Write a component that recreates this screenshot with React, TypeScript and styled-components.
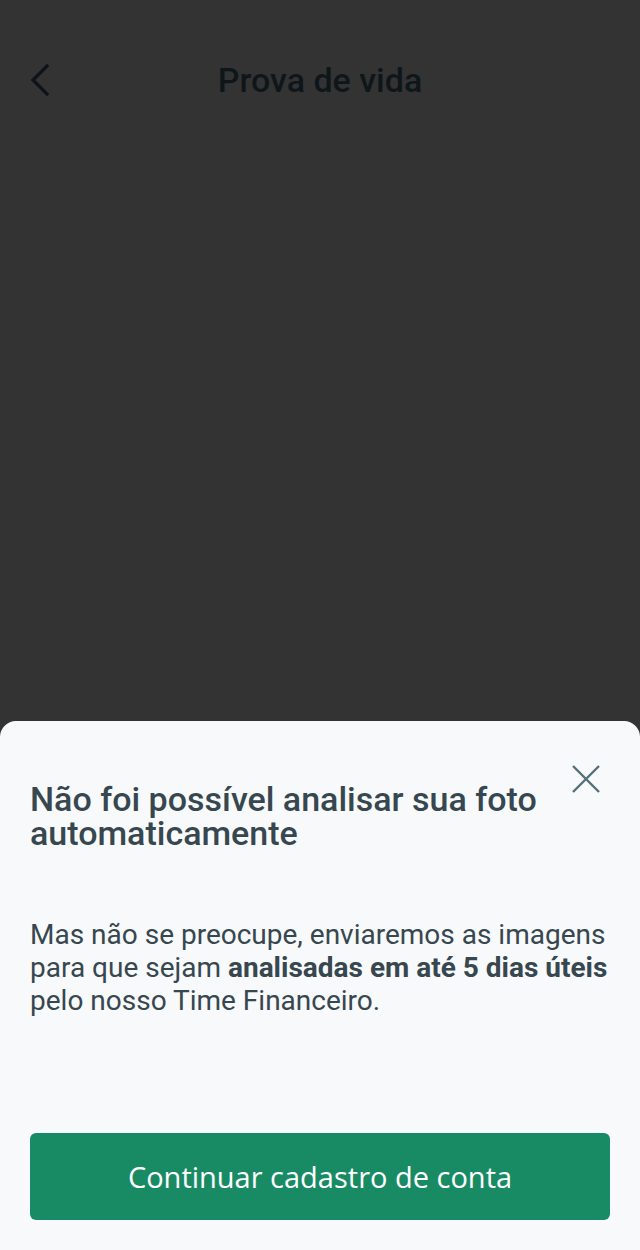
import React from 'react';
import styled, { createGlobalStyle } from 'styled-components';

const GlobalStyle = createGlobalStyle`
  html, body {
    margin: 0;
    padding: 0;
    background: #333333;
  }
  * { box-sizing: border-box; }
`;

const Screen = styled.div`
  width: 640px;
  height: 1250px;
  background: #333333;
  display: flex;
  flex-direction: column;
  font-family: Roboto, 'Noto Sans', sans-serif;
`;

const Header = styled.header`
  height: 160px;
  display: flex;
  align-items: flex-start;
  padding-top: 58px;
`;

const BackButton = styled.button`
  background: none;
  border: none;
  padding: 0;
  margin-left: 28px;
  width: 24px;
  height: 44px;
  display: flex;
  align-items: center;
  color: #0d1317;
  cursor: pointer;
`;

const Title = styled.h1`
  flex: 1;
  margin: 0 52px 0 0;
  text-align: center;
  font-size: 34px;
  font-weight: 500;
  line-height: 44px;
  color: #0f161a;
`;

const Spacer = styled.div`
  flex: 1;
`;

const Sheet = styled.section`
  background: #f7f9fb;
  border-radius: 16px 16px 0 0;
  padding: 42px 30px 30px;
  display: flex;
  flex-direction: column;
`;

const SheetHead = styled.div`
  display: flex;
  align-items: flex-start;
  justify-content: space-between;
`;

const SheetTitle = styled.h2`
  margin: 19px 0 0;
  font-size: 34px;
  font-weight: 500;
  line-height: 34px;
  color: #37474f;
  max-width: 530px;
`;

const CloseButton = styled.button`
  background: none;
  border: none;
  padding: 0;
  width: 32px;
  height: 32px;
  margin-right: 8px;
  color: #546e7a;
  cursor: pointer;
`;

const Body = styled.p`
  margin: 68px 0 0;
  font-size: 28px;
  line-height: 33px;
  color: #37474f;

  strong {
    font-weight: 700;
  }
`;

const PrimaryButton = styled.button`
  margin-top: 116px;
  height: 87px;
  width: 100%;
  border: none;
  border-radius: 6px;
  background: #198b64;
  color: #ffffff;
  font-family: 'Open Sans', 'Noto Sans', sans-serif;
  font-size: 29px;
  cursor: pointer;
`;

export default function App() {
  return (
    <Screen>
      <GlobalStyle />
      <Header>
        <BackButton aria-label="Voltar">
          <svg width="22" height="34" viewBox="0 0 22 34" fill="none">
            <path d="M19 3 L5 17 L19 31" stroke="currentColor" strokeWidth="3.2" strokeLinecap="square" />
          </svg>
        </BackButton>
        <Title>Prova de vida</Title>
      </Header>
      <Spacer />
      <Sheet>
        <SheetHead>
          <SheetTitle>Não foi possível analisar sua foto automaticamente</SheetTitle>
          <CloseButton aria-label="Fechar">
            <svg width="32" height="32" viewBox="0 0 32 32" fill="none">
              <path d="M3 3 L29 29 M29 3 L3 29" stroke="currentColor" strokeWidth="2.4" />
            </svg>
          </CloseButton>
        </SheetHead>
        <Body>
          Mas não se preocupe, enviaremos as imagens para que sejam{' '}
          <strong>analisadas em até 5 dias úteis</strong> pelo nosso Time Financeiro.
        </Body>
        <PrimaryButton>Continuar cadastro de conta</PrimaryButton>
      </Sheet>
    </Screen>
  );
}
